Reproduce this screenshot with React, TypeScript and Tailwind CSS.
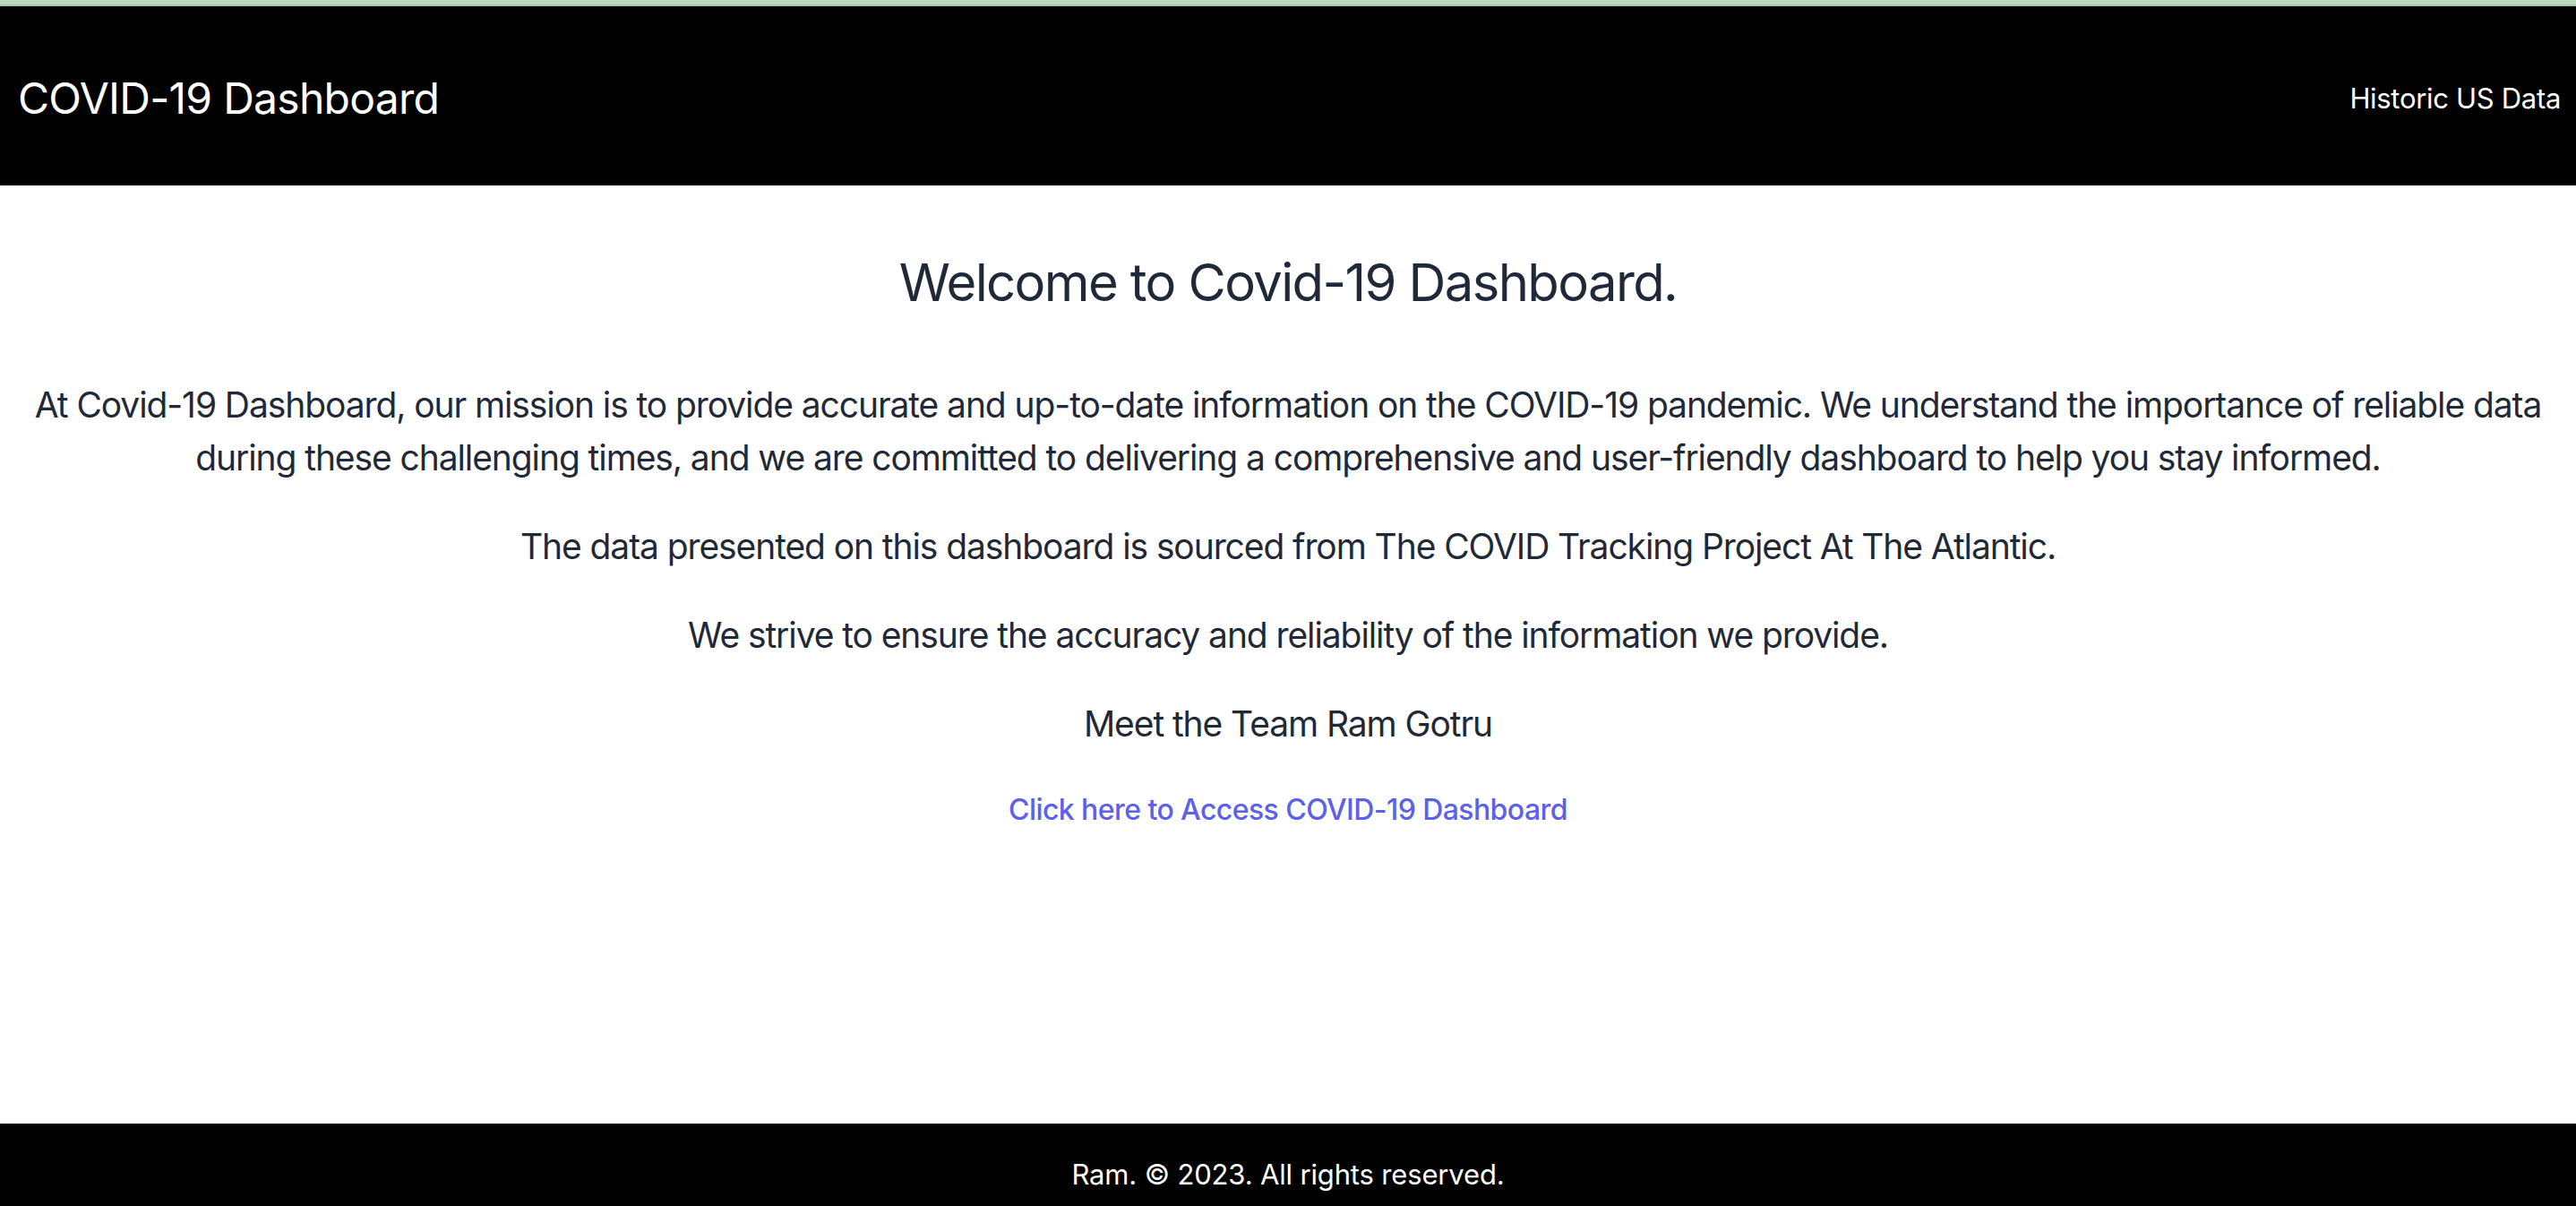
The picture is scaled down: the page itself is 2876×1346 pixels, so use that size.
export default function App() {
  return (
    <div className="min-h-screen bg-white font-['Inter','Liberation_Sans',sans-serif] text-[#1f2937]">
      {/* thin green strip above the navbar */}
      <div className="h-[7px] bg-[#bddcbd] border-b-2 border-[#a5c6a5]" />

      <nav className="flex h-[200px] items-center justify-between bg-black pl-[20px] pr-[17px] pt-[6px] text-white">
        <span className="text-[48px] tracking-[-0.015em]">COVID-19 Dashboard</span>
        <a href="#" className="text-[31px] tracking-[-0.01em] text-white">
          Historic US Data
        </a>
      </nav>

      <main className="flex h-[1047px] flex-col items-center px-[16px] pt-[72px] text-center">
        <h1 className="text-[58px] leading-[72px] tracking-[-0.028em]">Welcome to Covid-19 Dashboard.</h1>
        <div className="mt-[71px] flex flex-col items-center gap-[40px] text-[39px] leading-[59px] tracking-[-0.028em]">
          <p>
            At Covid-19 Dashboard, our mission is to provide accurate and up-to-date information on the COVID-19
            pandemic. We understand the importance of reliable data
            <br />
            during these challenging times, and we are committed to delivering a comprehensive and user-friendly
            dashboard to help you stay informed.
          </p>
          <p>The data presented on this dashboard is sourced from The COVID Tracking Project At The Atlantic.</p>
          <p>We strive to ensure the accuracy and reliability of the information we provide.</p>
          <p>Meet the Team Ram Gotru</p>
        </div>
        <a href="#" className="mt-[43px] text-[32px] font-medium leading-[48px] tracking-[-0.018em] text-[#5c60ea]">
          Click here to Access COVID-19 Dashboard
        </a>
      </main>

      <footer className="bg-black pt-[33px] pb-[33px] text-center text-[31px] leading-[48px] tracking-[-0.005em] text-white">
        Ram. © 2023. All rights reserved.
      </footer>
    </div>
  );
}
